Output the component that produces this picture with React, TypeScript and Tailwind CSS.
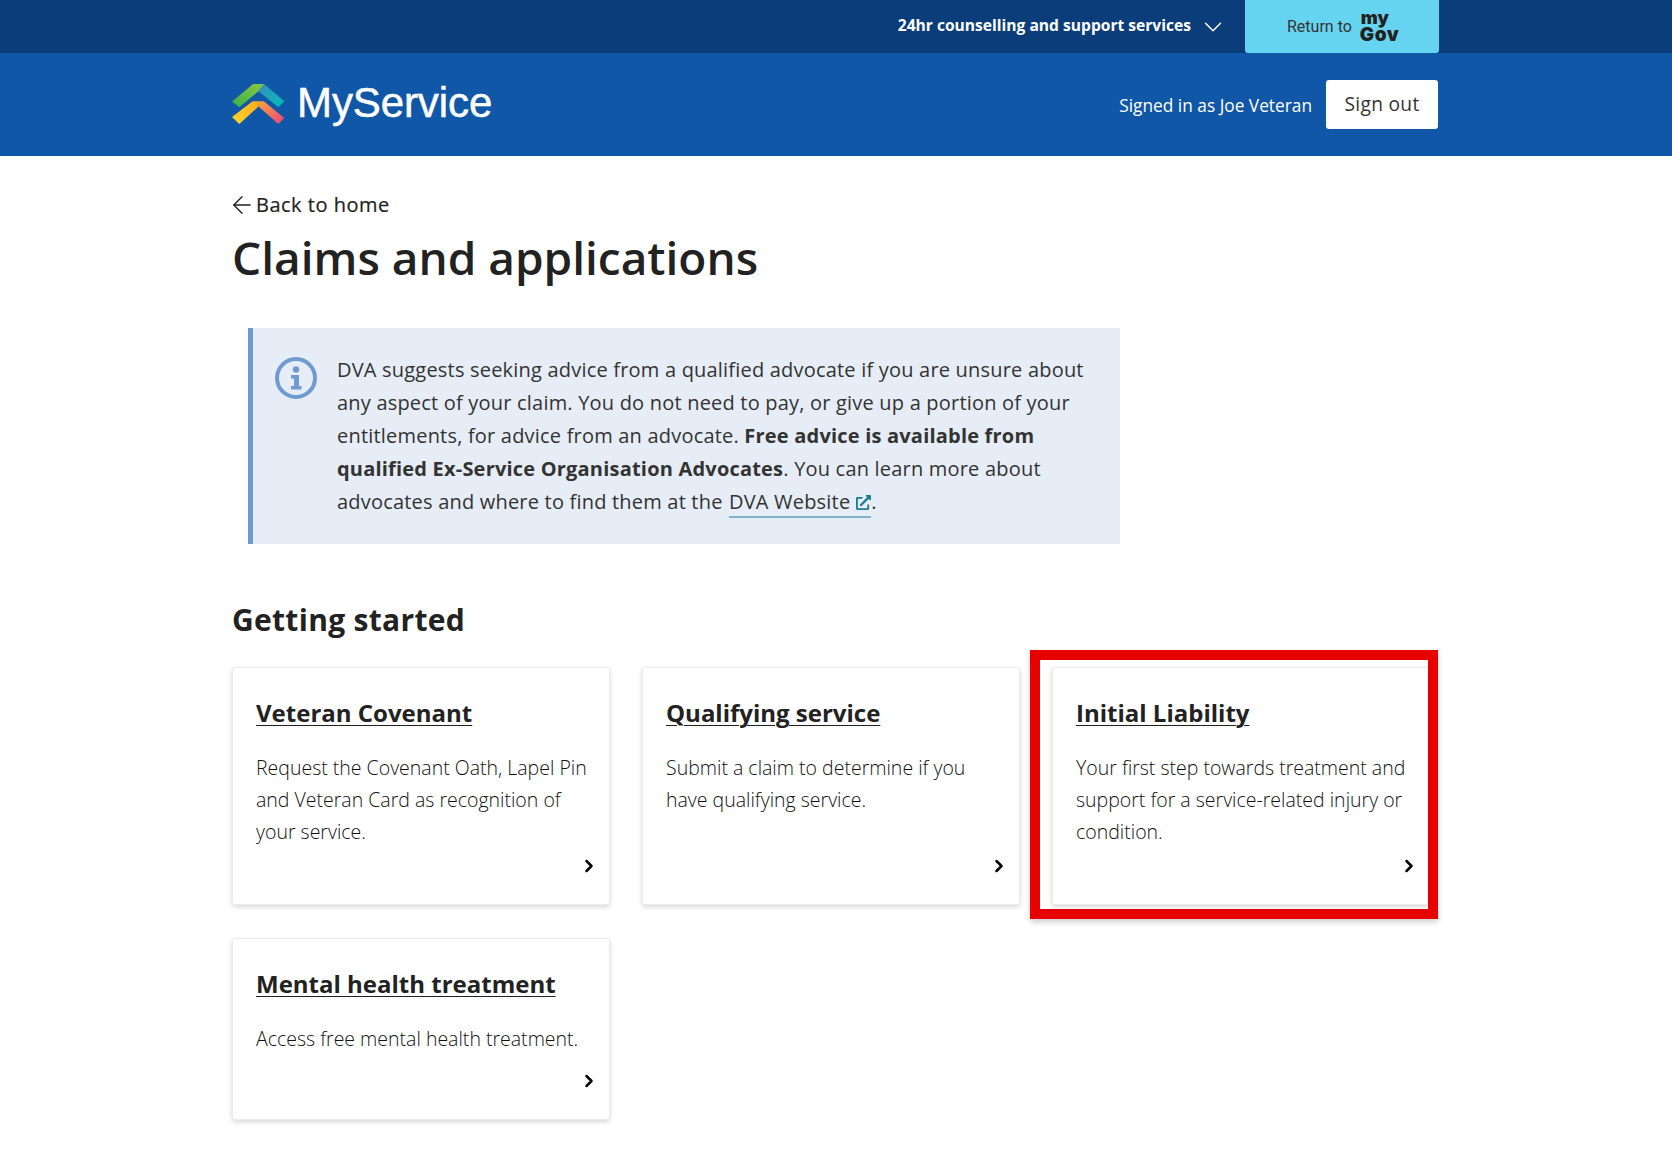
import React from "react";
import { ArrowLeft, ChevronDown, ChevronRight } from "lucide-react";
import { FaExternalLinkAlt } from "react-icons/fa";

const Logo = () => (
  <svg width="53" height="40" viewBox="0 0 160 121" className="mb-[1px] shrink-0">
    <defs>
      <linearGradient id="lg1" x1="0" y1="1" x2="1" y2="0">
        <stop offset="0" stopColor="#37b34a" />
        <stop offset="1" stopColor="#8dc63f" />
      </linearGradient>
      <linearGradient id="lg2" x1="0" y1="0" x2="1" y2="1">
        <stop offset="0" stopColor="#3b8dbd" />
        <stop offset="1" stopColor="#00bdb8" />
      </linearGradient>
      <linearGradient id="lg3" x1="0" y1="1" x2="1" y2="0">
        <stop offset="0" stopColor="#ffd52b" />
        <stop offset="1" stopColor="#fbab1c" />
      </linearGradient>
      <linearGradient id="lg4" x1="0" y1="0" x2="1" y2="1">
        <stop offset="0" stopColor="#fba63a" />
        <stop offset="1" stopColor="#e8417f" />
      </linearGradient>
    </defs>
    <polygon points="0,53 64,0 97,0 80,22 22,70" fill="url(#lg1)" />
    <polygon points="80,22 97,0 158,52 140,70" fill="url(#lg2)" />
    <polygon points="0,100 62,52 82,52 80,68 22,121" fill="url(#lg3)" />
    <polygon points="80,68 82,52 96,52 158,103 140,121" fill="url(#lg4)" />
  </svg>
);

const InfoIcon = () => (
  <svg width="42" height="42" viewBox="0 0 42 42" className="shrink-0">
    <circle cx="21" cy="21" r="19" fill="none" stroke="#6f9bd1" strokeWidth="4" />
    <circle cx="21" cy="12.5" r="3.2" fill="#6f9bd1" />
    <path d="M16 18h8v11h2.500v3.500h-10.500V29H19v-7.500h-3z" fill="#6f9bd1" />
  </svg>
);

const Card = ({
  title,
  text,
  height,
  children,
}: {
  title: string;
  text: string;
  height: string;
  children?: React.ReactNode;
}) => (
  <div className={`relative w-[378px] ${height}`}>
    <div className="relative h-full rounded-[3px] border border-[#ececec] bg-white pt-[27px] pr-[18px] pl-[23px] shadow-[0_2px_5px_rgba(0,0,0,0.16)]">
      <a href="#" className="text-[24px] leading-[36px] font-bold text-[#222] underline underline-offset-[3px] decoration-1">
        {title}
      </a>
      <p className="mt-[21px] text-[19.5px] leading-[32px] text-[#111] font-light">{text}</p>
      <ChevronRight size={20} strokeWidth={3} className="absolute right-[10px] bottom-[28px] text-black" />
    </div>
    {children}
  </div>
);

export default function App() {
  return (
    <div className="min-h-[1168px] bg-white font-['Open_Sans','Noto_Sans',sans-serif] text-[#222]">
      <div className="h-[53px] bg-[#0a3d7a]">
        <div className="ml-[232px] flex h-full w-[1207px] items-center justify-end">
          <span className="pb-[1px] text-[15.6px] font-bold text-white">24hr counselling and support services</span>
          <ChevronDown size={30} strokeWidth={1.2} className="mr-[17px] ml-[7px] text-white" />
          <a href="#" className="flex h-full w-[194px] items-center rounded-b-[3px] bg-[#66d3f0] pl-[42px]">
            <span className="pt-[1px] font-['Roboto',sans-serif] text-[16px] text-[#333]">Return to</span>
            <span className="ml-[8px] flex flex-col font-['Inter',sans-serif] font-black text-[#222]">
              <span className="pl-[1px] text-[18px] leading-[13px]">my</span>
              <span className="mt-[4px] text-[19px] leading-[14px] tracking-[0.5px]">Gov</span>
            </span>
          </a>
        </div>
      </div>

      <header className="h-[103px] bg-[#1157a7]">
        <div className="ml-[232px] flex h-full w-[1206px] items-center justify-between">
          <div className="flex items-center">
            <Logo />
            <span className="ml-[12px] pb-[4px] font-['Liberation_Sans',sans-serif] text-[42px] tracking-[-0.1px] text-white [-webkit-text-stroke:0.5px_white]">MyService</span>
          </div>
          <div className="flex items-center">
            <span className="pt-[2px] text-[17.3px] text-white">Signed in as Joe Veteran</span>
            <a href="#" className="ml-[14px] flex h-[49px] w-[112px] items-center justify-center rounded-[3px] bg-white text-[19.2px] tracking-[0.3px] text-[#333]">
              Sign out
            </a>
          </div>
        </div>
      </header>

      <main className="ml-[232px] w-[1206px] pt-[34px]">
        <a href="#" className="flex items-center text-[20px] leading-[30px] font-medium tracking-[0.5px] text-[#222] [-webkit-text-stroke:0.2px_#222]">
          <ArrowLeft size={28} strokeWidth={1.2} className="-ml-[4px]" />
          Back to home
        </a>
        <h1 className="mt-[5px] text-[46px] leading-[64px] font-semibold text-[#222]">Claims and applications</h1>

        <div className="mt-[39px] ml-[16px] flex h-[216px] w-[872px] border-l-[5px] border-[#6a9bd0] bg-[#e6edf6] pt-[25px] pr-[24px] pl-[22px]">
          <div className="pt-[4px]">
            <InfoIcon />
          </div>
          <p className="ml-[20px] text-[20px] leading-[33px] tracking-[0.2px] text-[#333]">
            DVA suggests seeking advice from a qualified advocate if you are unsure about any aspect of your claim. You do not need to pay, or give up a portion of your entitlements, for advice from an advocate.{" "}
            <strong className="font-bold">Free advice is available from qualified Ex-Service Organisation Advocates</strong>
            . You can learn more about advocates and where to find them at the{" "}
            <a href="#" className="ml-[1px] border-b-2 border-[#7fb5c9] pb-[1px]">
              DVA Website
              <FaExternalLinkAlt size={15} className="ml-[6px] inline align-[-1px] text-[#1d7d98]" />
            </a>
            .
          </p>
        </div>

        <h2 className="mt-[55px] text-[30px] leading-[42px] font-bold tracking-[0.3px] text-[#222]">Getting started</h2>

        <div className="mt-[26px] flex flex-wrap gap-x-[32px] gap-y-[33px]">
          <Card title="Veteran Covenant" text="Request the Covenant Oath, Lapel Pin and Veteran Card as recognition of your service." height="h-[238px]" />
          <Card title="Qualifying service" text="Submit a claim to determine if you have qualifying service." height="h-[238px]" />
          <Card title="Initial Liability" text="Your first step towards treatment and support for a service-related injury or condition." height="h-[238px]">
            <div className="absolute top-[-17px] left-[-22px] h-[269px] w-[408px] border-[10px] border-[#e60000] shadow-[0_3px_6px_rgba(0,0,0,0.2)]" />
          </Card>
          <Card title="Mental health treatment" text="Access free mental health treatment." height="h-[182px]" />
        </div>
      </main>
    </div>
  );
}
